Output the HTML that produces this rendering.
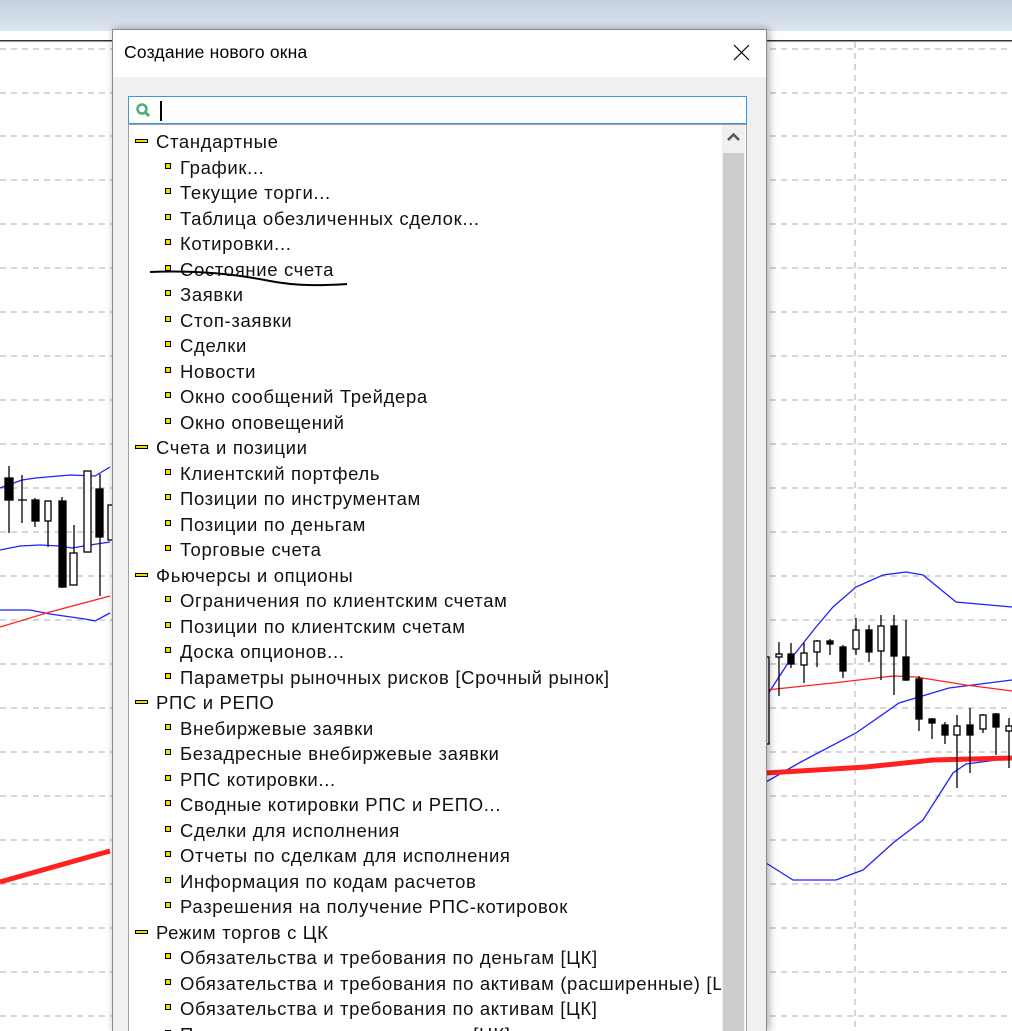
<!DOCTYPE html>
<html><head><meta charset="utf-8">
<style>
html,body{margin:0;padding:0;width:1012px;height:1031px;overflow:hidden;background:#fff;font-family:"Segoe UI","Liberation Sans","DejaVu Sans",sans-serif;position:relative}
#wrap{position:absolute;left:0;top:0;width:1012px;height:1031px;overflow:hidden}
#bg{position:absolute;left:0;top:0}
#dlg{position:absolute;left:112px;top:29px;width:653px;height:1001px;background:#f0f0f0;border:1px solid #8a8a8a;border-bottom:none;box-shadow:2px 0 8px rgba(0,0,0,.35);overflow:hidden}
#title{position:absolute;left:0;top:0;width:653px;height:47px;background:#fff;}
#title span{position:absolute;left:11px;top:12px;font-size:17.5px;color:#000;letter-spacing:0.2px}
#close{position:absolute;left:620px;top:14px}
#search{position:absolute;left:15px;top:66px;width:617px;height:26px;border:1px solid #3c96e6;background:#fff;}
#caret{position:absolute;left:31px;top:4px;width:2px;height:20px;background:#000}
#list{position:absolute;left:15px;top:94px;width:617px;height:920px;border:1px solid #a0a0a0;background:#fff;overflow:hidden}
#sb{position:absolute;left:593px;top:0;width:23px;height:920px;background:#f0f0f0}
#thumb{position:absolute;left:1px;top:28px;width:21px;height:900px;background:#cdcdcd}
#rows{position:absolute;left:129px;top:129px;width:592px;height:902px;overflow:hidden}
.r{position:absolute;height:25px;font-size:18.5px;line-height:25px;color:#111;white-space:nowrap;letter-spacing:0.65px}
.g{left:27px}
.i{left:51px}
.gi{position:absolute;left:-21px;top:10px;width:11px;height:2px;background:#e8e000;border:1px solid #000}
.bi{position:absolute;left:-15px;top:8px;width:4px;height:4px;background:#e8e000;border:1px solid #000}
</style></head><body><div id="wrap">
<svg id="bg" width="1012" height="1031" xmlns="http://www.w3.org/2000/svg">
<defs><linearGradient id="tb" x1="0" y1="0" x2="0" y2="1"><stop offset="0" stop-color="#c4d0dd"/><stop offset="1" stop-color="#dce6f1"/></linearGradient></defs>
<rect x="0" y="0" width="1012" height="31" fill="url(#tb)"/>
<rect x="0" y="31" width="1012" height="9" fill="#fff"/>
<rect x="0" y="40" width="1012" height="1.5" fill="#333"/>
<g stroke="#c8c8c8" stroke-width="1.5" stroke-dasharray="6,5">
<line x1="0" y1="49" x2="1012" y2="49"/><line x1="0" y1="93" x2="1012" y2="93"/><line x1="0" y1="136" x2="1012" y2="136"/><line x1="0" y1="180" x2="1012" y2="180"/><line x1="0" y1="224" x2="1012" y2="224"/><line x1="0" y1="268" x2="1012" y2="268"/><line x1="0" y1="312" x2="1012" y2="312"/><line x1="0" y1="356" x2="1012" y2="356"/><line x1="0" y1="400" x2="1012" y2="400"/><line x1="0" y1="444" x2="1012" y2="444"/><line x1="0" y1="488" x2="1012" y2="488"/><line x1="0" y1="532" x2="1012" y2="532"/><line x1="0" y1="576" x2="1012" y2="576"/><line x1="0" y1="620" x2="1012" y2="620"/><line x1="0" y1="664" x2="1012" y2="664"/><line x1="0" y1="708" x2="1012" y2="708"/><line x1="0" y1="752" x2="1012" y2="752"/><line x1="0" y1="796" x2="1012" y2="796"/><line x1="0" y1="840" x2="1012" y2="840"/><line x1="0" y1="884" x2="1012" y2="884"/><line x1="0" y1="928" x2="1012" y2="928"/><line x1="0" y1="972" x2="1012" y2="972"/><line x1="0" y1="1016" x2="1012" y2="1016"/>
<line x1="855" y1="42" x2="855" y2="1031"/>
</g>
<g fill="none" stroke="#2020ff" stroke-width="1.3">
<path d="M0 488 L22 480 L36 478 L70 475 L95 476 L110 467"/>
<path d="M0 550 L20 546 L40 545 L60 546 L72 548 L90 545 L110 542"/>
<path d="M0 610 L30 610 L50 614 L85 619 L95 621 L110 613"/>
<path d="M766 697 L790 660 L816 627 L833 607 L856 587 L883 575 L906 572 L923 575 L956 602 L1012 607"/>
<path d="M766 782 L799 763 L856 733 L899 703 L949 688 L1012 680"/>
<path d="M766 863 L793 880 L836 880 L863 870 L893 843 L923 820 L953 773 L966 764 L1012 758"/>
</g>
<g fill="none" stroke="#ff2020">
<path d="M0 627 L50 612 L110 596" stroke-width="1.3"/>
<path d="M766 690 L833 683 L893 676 L916 677 L966 685 L1012 691" stroke-width="1.3"/>
<path d="M0 882 L110 851" stroke-width="5"/>
<path d="M766 773 L866 767 L933 760 L1012 758" stroke-width="5"/>
</g>
<g stroke="#000" stroke-width="1.3">
<line x1="9" y1="466" x2="9" y2="533"/><rect x="5" y="478" width="8" height="22" fill="#000"/>
<line x1="22" y1="475" x2="22" y2="523"/><line x1="18" y1="500" x2="27" y2="500"/>
<line x1="35" y1="498" x2="35" y2="527"/><rect x="32" y="500" width="7" height="21" fill="#000"/>
<line x1="48" y1="501" x2="48" y2="547"/><rect x="45" y="501" width="6" height="20" fill="#fff"/>
<line x1="62" y1="497" x2="62" y2="588"/><rect x="59" y="501" width="7" height="86" fill="#000"/>
<line x1="74" y1="525" x2="74" y2="585"/><rect x="70" y="553" width="7" height="32" fill="#fff"/>
<rect x="84" y="471" width="7" height="81" fill="#fff"/>
<line x1="100" y1="474" x2="100" y2="596"/><rect x="96" y="489" width="7" height="48" fill="#000"/>
<rect x="108" y="505" width="6" height="35" fill="#fff"/>
<line x1="779" y1="642" x2="779" y2="696"/><rect x="776" y="654" width="6" height="3" fill="#fff"/>
<line x1="791" y1="643" x2="791" y2="668"/><rect x="788" y="654" width="6" height="10" fill="#000"/>
<line x1="804" y1="643" x2="804" y2="683"/><rect x="801" y="653" width="6" height="12" fill="#fff"/>
<line x1="817" y1="640" x2="817" y2="667"/><rect x="814" y="641" width="6" height="11" fill="#fff"/>
<line x1="830" y1="639" x2="830" y2="655"/><rect x="827" y="641" width="6" height="3" fill="#000"/>
<line x1="843" y1="645" x2="843" y2="678"/><rect x="840" y="647" width="6" height="24" fill="#000"/>
<line x1="856" y1="618" x2="856" y2="655"/><rect x="853" y="630" width="6" height="19" fill="#fff"/>
<line x1="869" y1="625" x2="869" y2="662"/><rect x="866" y="630" width="6" height="22" fill="#000"/>
<line x1="881" y1="615" x2="881" y2="680"/><rect x="878" y="626" width="6" height="25" fill="#fff"/>
<line x1="894" y1="615" x2="894" y2="695"/><rect x="891" y="626" width="6" height="30" fill="#000"/>
<line x1="906" y1="620" x2="906" y2="681"/><rect x="903" y="657" width="6" height="23" fill="#000"/>
<line x1="919" y1="676" x2="919" y2="731"/><rect x="916" y="679" width="6" height="40" fill="#000"/>
<line x1="932" y1="718" x2="932" y2="739"/><rect x="929" y="719" width="6" height="4" fill="#000"/>
<line x1="945" y1="722" x2="945" y2="744"/><rect x="942" y="725" width="6" height="10" fill="#000"/>
<line x1="957" y1="715" x2="957" y2="788"/><rect x="954" y="726" width="6" height="9" fill="#fff"/>
<line x1="970" y1="708" x2="970" y2="773"/><rect x="967" y="725" width="6" height="10" fill="#000"/>
<line x1="983" y1="714" x2="983" y2="733"/><rect x="980" y="715" width="6" height="14" fill="#fff"/>
<line x1="996" y1="713" x2="996" y2="755"/><rect x="993" y="714" width="6" height="13" fill="#000"/>
<line x1="1009" y1="718" x2="1009" y2="768"/><rect x="1006" y="726" width="6" height="5" fill="#fff"/>
<rect x="766" y="657" width="3" height="87" fill="#fff"/>
</g>
</svg>
<div id="dlg">
 <div id="title"><span>Создание нового окна</span>
 <svg id="close" width="18" height="18"><path d="M1 1 L16 16 M16 1 L1 16" stroke="#000" stroke-width="1.2"/></svg></div>
 <div id="search">
  <svg width="22" height="22" style="position:absolute;left:5px;top:3px"><circle cx="8" cy="9" r="4.5" fill="none" stroke="#4caf72" stroke-width="2.5"/><path d="M11 12 L15 16" stroke="#4caf72" stroke-width="3"/></svg>
  <div id="caret"></div>
 </div>
 <div id="list">
  <div id="sb"><svg width="23" height="24"><path d="M6 15 L11.5 9.5 L17 15" fill="none" stroke="#555" stroke-width="2.5"/></svg><div id="thumb"></div></div>
 </div>
</div>
<div id="rows">
<div class="r g" style="top:0px"><i class="gi"></i>Стандартные</div>
<div class="r i" style="top:25.5px"><i class="bi"></i>График...</div>
<div class="r i" style="top:51px"><i class="bi"></i>Текущие торги...</div>
<div class="r i" style="top:76.5px"><i class="bi"></i>Таблица обезличенных сделок...</div>
<div class="r i" style="top:102px"><i class="bi"></i>Котировки...</div>
<div class="r i" style="top:127.5px"><i class="bi"></i>Состояние счета</div>
<div class="r i" style="top:153px"><i class="bi"></i>Заявки</div>
<div class="r i" style="top:178.5px"><i class="bi"></i>Стоп-заявки</div>
<div class="r i" style="top:204px"><i class="bi"></i>Сделки</div>
<div class="r i" style="top:229.5px"><i class="bi"></i>Новости</div>
<div class="r i" style="top:255px"><i class="bi"></i>Окно сообщений Трейдера</div>
<div class="r i" style="top:280.5px"><i class="bi"></i>Окно оповещений</div>
<div class="r g" style="top:306px"><i class="gi"></i>Счета и позиции</div>
<div class="r i" style="top:331.5px"><i class="bi"></i>Клиентский портфель</div>
<div class="r i" style="top:357px"><i class="bi"></i>Позиции по инструментам</div>
<div class="r i" style="top:382.5px"><i class="bi"></i>Позиции по деньгам</div>
<div class="r i" style="top:408px"><i class="bi"></i>Торговые счета</div>
<div class="r g" style="top:433.5px"><i class="gi"></i>Фьючерсы и опционы</div>
<div class="r i" style="top:459px"><i class="bi"></i>Ограничения по клиентским счетам</div>
<div class="r i" style="top:484.5px"><i class="bi"></i>Позиции по клиентским счетам</div>
<div class="r i" style="top:510px"><i class="bi"></i>Доска опционов...</div>
<div class="r i" style="top:535.5px"><i class="bi"></i>Параметры рыночных рисков [Срочный рынок]</div>
<div class="r g" style="top:561px"><i class="gi"></i>РПС и РЕПО</div>
<div class="r i" style="top:586.5px"><i class="bi"></i>Внебиржевые заявки</div>
<div class="r i" style="top:612px"><i class="bi"></i>Безадресные внебиржевые заявки</div>
<div class="r i" style="top:637.5px"><i class="bi"></i>РПС котировки...</div>
<div class="r i" style="top:663px"><i class="bi"></i>Сводные котировки РПС и РЕПО...</div>
<div class="r i" style="top:688.5px"><i class="bi"></i>Сделки для исполнения</div>
<div class="r i" style="top:714px"><i class="bi"></i>Отчеты по сделкам для исполнения</div>
<div class="r i" style="top:739.5px"><i class="bi"></i>Информация по кодам расчетов</div>
<div class="r i" style="top:765px"><i class="bi"></i>Разрешения на получение РПС-котировок</div>
<div class="r g" style="top:790.5px"><i class="gi"></i>Режим торгов с ЦК</div>
<div class="r i" style="top:816px"><i class="bi"></i>Обязательства и требования по деньгам [ЦК]</div>
<div class="r i" style="top:841.5px"><i class="bi"></i>Обязательства и требования по активам (расширенные) [ЦК]</div>
<div class="r i" style="top:867px"><i class="bi"></i>Обязательства и требования по активам [ЦК]</div>
<div class="r i" style="top:892.5px"><i class="bi"></i>Параметры процентных рисков [ЦК]</div>
</div>
<svg style="position:absolute;left:0;top:0" width="1012" height="1031"><path d="M150 272 C 200 270, 240 275, 270 281 C 300 287, 330 285, 347 284" fill="none" stroke="#000" stroke-width="2"/></svg>
</div></body></html>
